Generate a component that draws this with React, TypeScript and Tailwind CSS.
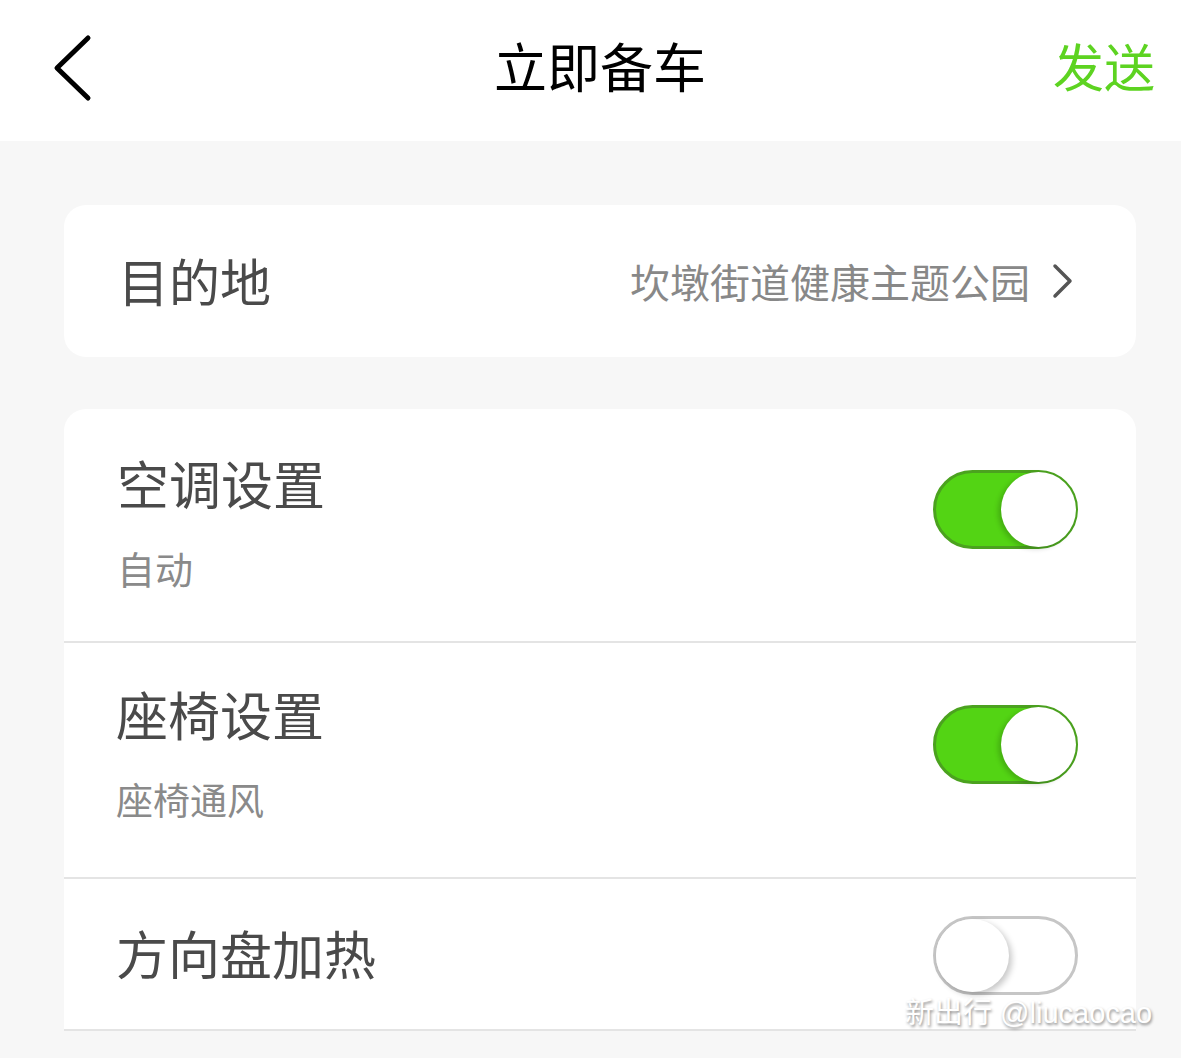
import React from "react";

const font = { fontFamily: '"Noto Sans CJK SC", "Noto Sans", sans-serif' };

function Toggle({ on }: { on: boolean }) {
  if (on) {
    return (
      <div className="relative w-[145px] h-[79px] rounded-full bg-[#53d414] border-[3px] border-[#4ba21f] shrink-0">
        <div className="absolute right-[-1px] top-[-1px] w-[75px] h-[75px] rounded-full bg-white shadow-[-3px_2px_5px_rgba(0,0,0,0.18)]" />
      </div>
    );
  }
  return (
    <div className="relative w-[145px] h-[79px] rounded-full bg-white border-[3px] border-[#c6c6c6] shrink-0">
      <div className="absolute left-[0px] top-[0px] w-[73px] h-[73px] rounded-full bg-white shadow-[3px_3px_6px_rgba(0,0,0,0.22)]" />
    </div>
  );
}

export default function App() {
  return (
    <div className="relative w-[1181px] h-[1058px] bg-[#f7f7f7] overflow-hidden" style={font}>
      {/* Header */}
      <div className="relative h-[141px] bg-white flex items-center justify-center">
        <svg className="absolute left-[50px] top-[33px]" width="46" height="72" viewBox="0 0 46 72">
          <polyline points="38,5 7,35 38,65" fill="none" stroke="#000" strokeWidth="5" strokeLinecap="round" strokeLinejoin="round" />
        </svg>
        <div className="text-[53px] leading-none text-black mt-[-10px] ml-[19px]">立即备车</div>
        <div className="absolute right-[26px] top-[40px] text-[51px] leading-none text-[#5dd321]">发送</div>
      </div>

      <div className="pl-[64px] pr-[45px] pt-[64px]">
        {/* Destination card */}
        <div className="h-[152px] bg-white rounded-[22px] flex items-center pl-[54px] pr-[62px]">
          <div className="text-[51px] leading-none text-[#4a4a4a] mt-[-2px]">目的地</div>
          <div className="ml-auto flex items-center">
            <div className="text-[40px] leading-none text-[#888]">坎墩街道健康主题公园</div>
            <svg className="ml-[22px]" width="22" height="36" viewBox="0 0 22 36">
              <polyline points="3,3 18,18 3,33" fill="none" stroke="#555" strokeWidth="3.5" strokeLinecap="round" strokeLinejoin="round" />
            </svg>
          </div>
        </div>

        {/* Settings card */}
        <div className="mt-[52px] bg-white rounded-t-[22px]">
          <div className="h-[234px] flex pl-[53px] pr-[58px] border-b-2 border-[#e4e4e4]">
            <div className="flex flex-col pt-[44px]">
              <div className="text-[52px] leading-[60px] text-[#4a4a4a]">空调设置</div>
              <div className="mt-[33px] text-[38px] leading-[44px] text-[#8a8a8a]">自动</div>
            </div>
            <div className="ml-auto pt-[61px]">
              <Toggle on />
            </div>
          </div>
          <div className="h-[236px] flex pl-[52px] pr-[58px] border-b-2 border-[#e4e4e4]">
            <div className="flex flex-col pt-[41px]">
              <div className="text-[52px] leading-[60px] text-[#4a4a4a]">座椅设置</div>
              <div className="mt-[33px] text-[37px] leading-[44px] text-[#8a8a8a]">座椅通风</div>
            </div>
            <div className="ml-auto pt-[62px]">
              <Toggle on />
            </div>
          </div>
          <div className="h-[152px] flex items-center pl-[52px] pr-[58px] border-b-2 border-[#e4e4e4]">
            <div className="text-[52px] leading-[60px] text-[#4a4a4a] mt-[-2px]">方向盘加热</div>
            <div className="ml-auto mt-[2px]">
              <Toggle on={false} />
            </div>
          </div>
        </div>
      </div>

      {/* Watermark */}
      <div
        className="absolute left-[905px] top-[995px] text-[29px] leading-[36px] text-white whitespace-nowrap"
        style={{ textShadow: "1px 2px 3px rgba(0,0,0,0.45)", fontFamily: '"Liberation Sans", "Noto Sans CJK SC", sans-serif' }}
      >
        新出行 @liucaocao
      </div>
    </div>
  );
}
